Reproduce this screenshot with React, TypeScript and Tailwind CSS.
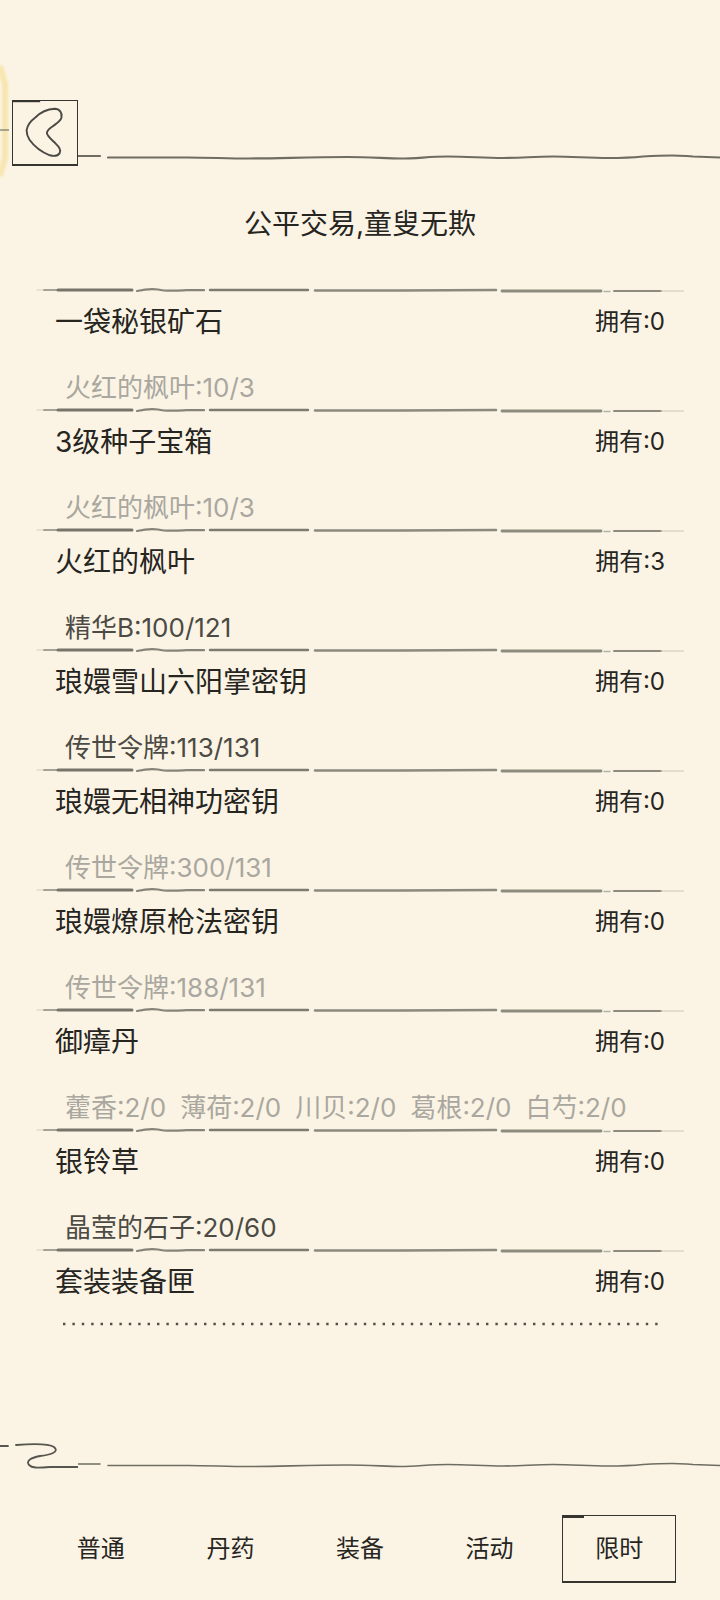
const items = [
    { name: '一袋秘银矿石', own: 0, costs: ['火红的枫叶:10/3'], enough: false },
    { name: '3级种子宝箱', own: 0, costs: ['火红的枫叶:10/3'], enough: false },
    { name: '火红的枫叶', own: 3, costs: ['精华B:100/121'], enough: true },
    { name: '琅嬛雪山六阳掌密钥', own: 0, costs: ['传世令牌:113/131'], enough: true },
    { name: '琅嬛无相神功密钥', own: 0, costs: ['传世令牌:300/131'], enough: false },
    { name: '琅嬛燎原枪法密钥', own: 0, costs: ['传世令牌:188/131'], enough: false },
    { name: '御瘴丹', own: 0, costs: ['藿香:2/0', '薄荷:2/0', '川贝:2/0', '葛根:2/0', '白芍:2/0'], enough: false },
    { name: '银铃草', own: 0, costs: ['晶莹的石子:20/60'], enough: true },
];

const tabs = ['普通', '丹药', '装备', '活动', '限时'];

// brush stroke between rows
const RowDivider = () => (
    <svg className="block w-[648px] h-[6px] shrink-0" viewBox="0 0 648 6" fill="none" strokeLinecap="round">
        <path d="M1 3 H8" stroke="#d3d0c2" strokeWidth="1.2" />
        <path d="M8 3 H22" stroke="#a5a397" strokeWidth="2" />
        <path d="M22 3 H96" stroke="#77756a" strokeWidth="3" />
        <path d="M101 4 C110 2 116 1.5 122 2.5 C130 4.5 136 4 150 3.2 H168" stroke="#85837a" strokeWidth="2.2" />
        <path d="M174 3 H272" stroke="#7d7b70" strokeWidth="2.4" />
        <path d="M279 3.5 H364 L460 3" stroke="#8b897d" strokeWidth="2.6" />
        <path d="M466 4 H565" stroke="#8d8b7e" strokeWidth="2.8" />
        <path d="M568 4.5 H574" stroke="#b5b3a6" strokeWidth="1.5" />
        <path d="M578 4 H625" stroke="#8d8b7e" strokeWidth="2" />
        <path d="M625 4 H648" stroke="#c9c6b8" strokeWidth="1" />
    </svg>
);

const WavyLine = ({ stroke, width }: { stroke: string; width: number }) => (
    <svg className="block flex-1 h-[8px]" viewBox="0 0 642 8" fill="none" strokeLinecap="round">
        <path d="M0 3 H22" stroke={stroke} strokeWidth={width} />
        <path
            d="M30 4.5 H110 C130 4.5 150 5.5 170 5.5 C200 5.5 230 4 270 4 C290 4 310 5.5 322 5.5 C340 5.5 350 3.5 370 3.5 C390 3.5 405 5 425 5 C445 5 455 3.5 475 3.5 C495 3.5 510 5 530 5 C545 5 550 5 565 3.5 C600 1.5 600 2.5 615 3.5 L642 4.5"
            stroke={stroke}
            strokeWidth={width}
        />
    </svg>
);

export default function App() {
    return (
        <div
            className="relative w-[720px] h-[1600px] overflow-hidden bg-[#fbf4e4] text-[#26251f]"
            style={{ fontFamily: 'Inter, "Noto Sans CJK SC", sans-serif' }}
        >
            {/* glow at the left edge */}
            <svg className="absolute left-0 top-[62px] w-[14px] h-[118px]" viewBox="0 0 14 118" fill="none">
                <path className="blur-[1px]" d="M0 4 L5 22 V96 L0 114" stroke="#f7e6b0" strokeWidth="6" />
                <path d="M0 68 H9" stroke="#77756a" strokeWidth="1.2" />
            </svg>

            {/* Header */}
            <div className="flex items-end pt-[100px] pl-3">
                <button className="flex items-center justify-center w-[66px] h-[66px] shrink-0 border border-b-2 border-[#35342f]">
                    <svg className="w-[66px] h-[66px]" viewBox="0 0 66 66" fill="none">
                        <path d="M0 0.5 H28" stroke="#35342f" strokeWidth="1.5" />
                        <path
                            d="M14 30 C15 24 19 20 23 17 C28 12 35 8.5 43 8 C48 8 51 12 50 17 C49 21 45 23 41 26 C38 28 35 30 35 33 C35 36 40 40 44 44 C47 47 50 50 48 54 C46 57 42 57 38 56 C30 53 22 47 17 40 C15 37 14 33 14 30 Z"
                            stroke="#4a4943"
                            strokeWidth="2"
                        />
                    </svg>
                </button>
                <div className="flex flex-1 mb-[5px]">
                    <WavyLine stroke="#6f6d62" width={2.2} />
                </div>
            </div>

            <h1 className="mt-[38px] h-[40px] text-center text-[28px] leading-[40px] font-normal">公平交易,童叟无欺</h1>

            {/* Goods list */}
            <div className="flex flex-col ml-9 w-[648px] mt-[43px]">
                {items.map((item) => (
                    <div key={item.name} className="flex flex-col h-[120px]">
                        <RowDivider />
                        <div className="flex items-center justify-between h-[40px] mt-[9px] px-[19px]">
                            <span className="text-[28px] leading-[40px]">{item.name}</span>
                            <span className="text-[24px] leading-[40px]">拥有:{item.own}</span>
                        </div>
                        <div
                            className={`flex gap-[14px] h-[36px] mt-[28px] pl-[29px] text-[26px] leading-[36px] ${item.enough ? 'text-[#4b4a44]' : 'text-[#a9a79f]'}`}
                        >
                            {item.costs.map((cost) => (
                                <span key={cost}>{cost}</span>
                            ))}
                        </div>
                    </div>
                ))}
                <div className="flex flex-col">
                    <RowDivider />
                    <div className="flex items-center justify-between h-[40px] mt-[9px] px-[19px]">
                        <span className="text-[28px] leading-[40px]">套装装备匣</span>
                        <span className="text-[24px] leading-[40px]">拥有:0</span>
                    </div>
                    <svg className="block ml-[26px] mt-[20px] w-[596px] h-[4px]" viewBox="0 0 596 4" fill="none">
                        <path d="M1 2 H596" stroke="#4f4e47" strokeWidth="2.4" strokeDasharray="2.4 7" />
                    </svg>
                </div>
            </div>

            {/* Bottom line with the curl */}
            <div className="flex items-end mt-[115px] h-[30px]">
                <svg className="w-[78px] h-[30px] shrink-0" viewBox="0 0 78 30" fill="none" strokeLinecap="round">
                    <path d="M0 5 H8 M16 4 C30 3 48 2 54 6 C60 11 50 14 40 15 C30 17 26 20 29 24 C32 27 36 27 50 26 H100" stroke="#57564e" strokeWidth="1.8" />
                </svg>
                <div className="flex flex-1 mb-[2px]">
                    <WavyLine stroke="#6f6d62" width={1.6} />
                </div>
            </div>

            {/* Tabs */}
            <div className="grid grid-cols-5 items-center w-[648px] ml-9 mt-[44px] h-[68px]">
                {tabs.map((tab) => (
                    <div key={tab} className="flex items-center justify-center">
                        <div
                            className={`relative flex items-center justify-center w-[114px] h-[68px] text-[24px] ${tab === '限时' ? 'border border-b-2 border-[#35342f]' : ''}`}
                        >
                            {tab === '限时' && <span className="absolute -left-px -top-px w-[22px] h-[3px] bg-[#35342f]" />}
                            {tab}
                        </div>
                    </div>
                ))}
            </div>
        </div>
    );
}
